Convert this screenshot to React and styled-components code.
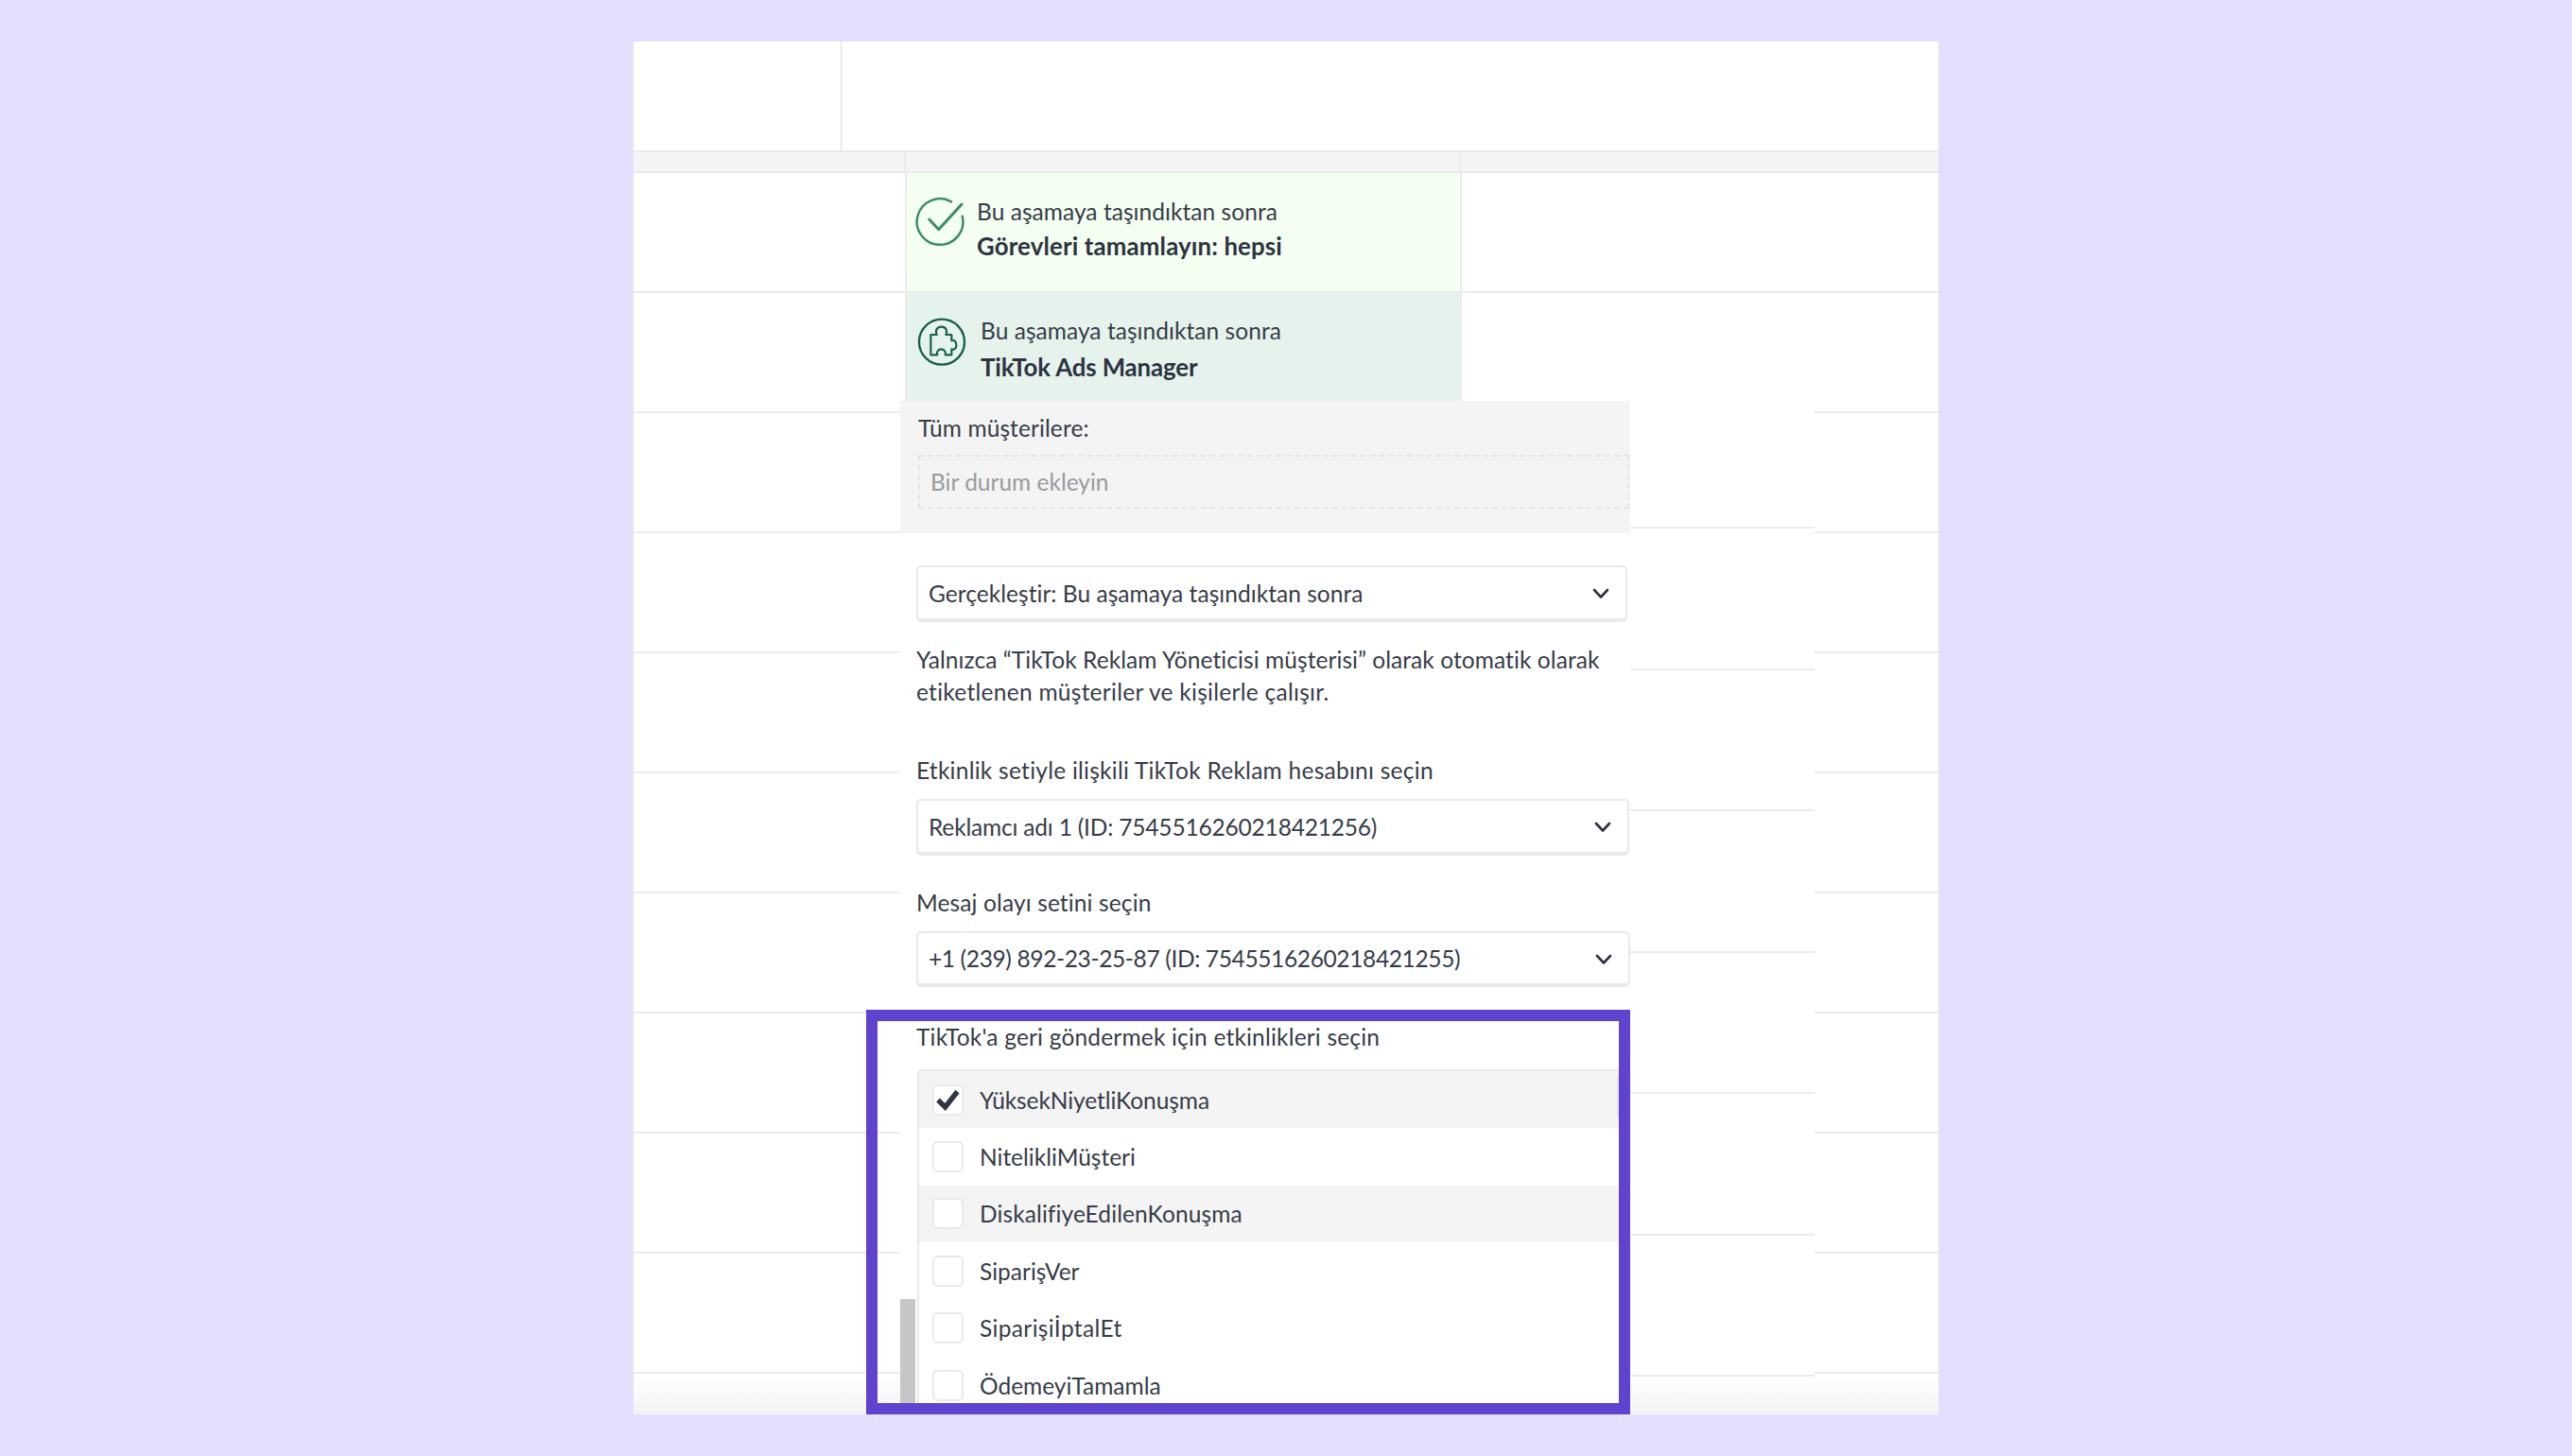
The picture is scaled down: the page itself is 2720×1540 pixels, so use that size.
import React from "react";
import styled, { createGlobalStyle } from "styled-components";

const Global = createGlobalStyle`
  html, body { margin: 0; padding: 0; background: #e4dffe; }
  body { font-family: "Lato", "Open Sans", sans-serif; color: #363c49; }
`;

const Page = styled.div`
  width: 2720px;
  height: 1540px;
  display: flex;
  align-items: center;
  justify-content: center;
`;
const Board = styled.div`
  position: relative;
  width: 1380px;
  height: 1452px;
  background: #fff;
  overflow: hidden;
  display: flex;
  flex-direction: column;
`;
const TopBar = styled.div`
  height: 117px;
  flex: none;
  box-sizing: border-box;
  border-bottom: 2px solid #ebebeb;
  display: flex;
`;
const TopCell = styled.div`
  width: 221px;
  box-sizing: border-box;
  border-right: 2px solid #ebebeb;
`;
const Band = styled.div`
  height: 22px;
  flex: none;
  box-sizing: border-box;
  background: #f4f4f4;
  border-bottom: 2px solid #ebebeb;
  display: flex;
`;
const BandCell = styled.div`
  width: ${(p) => p.$w}px;
  box-sizing: border-box;
  border-right: 2px solid #ebebeb;
`;
const Body = styled.div`
  flex: 1;
  display: flex;
  min-height: 0;
`;
const Column = styled.div`
  width: ${(p) => (p.$w ? `${p.$w}px` : "auto")};
  flex: ${(p) => (p.$w ? "none" : "1")};
  display: flex;
  flex-direction: column;
`;
const GridRow = styled.div`
  height: ${(p) => p.$h}px;
  flex: none;
  box-sizing: border-box;
  border-bottom: 2px solid #ebebeb;
`;
const StageColumn = styled.div`
  width: 589px;
  flex: none;
  box-sizing: border-box;
  border-left: 2px solid #ebebeb;
  border-right: 2px solid #ebebeb;
  display: flex;
  flex-direction: column;
`;
const StageCell = styled.div`
  height: ${(p) => p.$h}px;
  flex: none;
  box-sizing: border-box;
  background: ${(p) => p.$bg};
  border-bottom: 2px solid #ebebeb;
  padding: ${(p) => p.$pad};
  display: flex;
  align-items: flex-start;
  gap: ${(p) => p.$gap}px;
`;
const IconSlot = styled.div`
  flex: none;
  height: 54px;
  margin-top: ${(p) => p.$mt}px;
`;
const StageText = styled.div`
  display: flex;
  flex-direction: column;
  font-size: 24.5px;
  line-height: ${(p) => p.$lh}px;
  white-space: nowrap;
  letter-spacing: 0.05px;
`;
const StageStrong = styled.span`
  font-weight: 700;
  font-size: 25.8px;
  color: #2d3340;
  letter-spacing: ${(p) => p.$ls}px;
`;
const Rest = styled.div`
  flex: 1;
  display: flex;
  flex-direction: column;
  min-width: 0;
`;
const RestColumns = styled.div`
  flex: 1;
  display: flex;
`;
const Fade = styled.div`
  position: absolute;
  left: 0;
  right: 0;
  bottom: 0;
  height: 42px;
  background: linear-gradient(rgba(244, 244, 244, 0), #f3f3f3);
`;

const Popup = styled.div`
  position: absolute;
  left: 282px;
  top: 380px;
  width: 772px;
  height: 1072px;
  background: #fff;
  display: flex;
  flex-direction: column;
  overflow: hidden;
`;
const ConditionPanel = styled.div`
  flex: none;
  height: 140px;
  box-sizing: border-box;
  background: #f4f4f4;
  padding: 12px 0 0 19px;
`;
const Text = styled.div`
  font-size: 24.5px;
  line-height: 34px;
  white-space: nowrap;
  letter-spacing: ${(p) => p.$ls || 0}px;
  margin-top: ${(p) => p.$mt || 0}px;
`;
const ConditionBox = styled.div`
  margin-top: 11px;
  width: 752px;
  height: 57px;
  box-sizing: border-box;
  border: 2px dashed #e5e5e5;
  padding-left: 11px;
  display: flex;
  align-items: center;
  font-size: 24.5px;
  color: #999b9e;
`;
const Form = styled.div`
  flex: 1;
  min-height: 0;
  display: flex;
  flex-direction: column;
  padding-left: 17px;
`;
const Select = styled.div`
  flex: none;
  margin-top: ${(p) => p.$mt}px;
  width: ${(p) => p.$w}px;
  height: ${(p) => p.$h}px;
  box-sizing: border-box;
  border: 2px solid #e9e9e9;
  border-bottom-width: 4px;
  border-radius: 5px;
  background: #fff;
  display: flex;
  align-items: center;
  justify-content: space-between;
  padding: 0 17px 0 11px;
  font-size: 24.5px;
  white-space: nowrap;
  letter-spacing: ${(p) => p.$ls || 0}px;
`;
const ChevronIcon = styled.svg`
  flex: none;
  margin-top: 2px;
`;
const Para = styled.div`
  margin-top: 23px;
  font-size: 24.5px;
  line-height: 34px;
`;
const ParaLine = styled.div`
  white-space: nowrap;
  letter-spacing: ${(p) => p.$ls}px;
`;
const List = styled.div`
  position: relative;
  flex: 1;
  min-height: 0;
  margin: 17px 0 0 1px;
  box-sizing: border-box;
  border: 2px solid #e9e9e9;
  border-right: 0;
  border-bottom: 0;
  border-radius: 5px 0 0 0;
  overflow: hidden;
`;
const Item = styled.div`
  height: 60.4px;
  box-sizing: border-box;
  padding-left: 14px;
  display: flex;
  align-items: center;
  gap: 17px;
  font-size: 24.5px;
  white-space: nowrap;
  letter-spacing: ${(p) => p.$ls}px;
  background: ${(p) => (p.$shade ? "#f4f4f4" : "#fff")};
`;
const Box = styled.span`
  width: 33px;
  height: 33px;
  flex: none;
  box-sizing: border-box;
  border: 2px solid #e9e9e9;
  border-radius: 5px;
  background: #fff;
  display: flex;
  align-items: center;
  justify-content: center;
`;
const ListThumb = styled.div`
  position: absolute;
  top: 4px;
  right: 4px;
  width: 10px;
  height: 47px;
  border-radius: 4px;
  background: #e2e2e2;
`;
const PopupThumb = styled.div`
  position: absolute;
  left: 0;
  top: 950px;
  width: 16px;
  height: 122px;
  background: #c5c6c5;
`;
const Frame = styled.div`
  position: absolute;
  left: 246px;
  top: 1024px;
  width: 808px;
  height: 428px;
  box-sizing: border-box;
  border: 12px solid #5f43cf;
`;

const Chevron = () => (
  <ChevronIcon width="18" height="12" viewBox="0 0 18 12" fill="none" stroke="#2d3340" strokeWidth="2.6" strokeLinecap="round" strokeLinejoin="round">
    <path d="M2 2l7 7.5L16 2" />
  </ChevronIcon>
);
const CheckCircle = () => (
  <svg width="54" height="54" viewBox="50 50 162 162" fill="none" stroke="#3a8f68" strokeWidth="7.5" strokeLinecap="round" strokeLinejoin="round">
    <path d="M170 72A73 73 0 1 0 205 118" />
    <path d="M100 128L130 160L203 80" strokeWidth="9" />
  </svg>
);
const PuzzleCircle = () => (
  <svg width="54" height="54" viewBox="60 435 162 162" fill="none" stroke="#17604d" strokeWidth="7" strokeLinejoin="round">
    <circle cx="141" cy="515" r="72" />
    <path d="M106 492H125C119 478 126 467 140 467C154 467 160 480 154 492H172V511C182 507 187 516 187 525C187 534 182 541 172 538V556H152C155 546 148 538 139 538C130 538 123 546 127 556H106Z" strokeWidth="6.5" />
  </svg>
);
const Tick = () => (
  <svg width="33" height="33" viewBox="0 0 33 33" fill="none" stroke="#2f3542" strokeWidth="5.4" strokeLinejoin="miter" style={{ flex: "none", margin: "-2px" }}>
    <path d="M6 16.5L13.6 24L26.5 7.5" />
  </svg>
);

const leftRows = [127, 127, 127, 127, 127, 127, 127, 127, 127, 127, 127];
const midRows = [249, 149.5, 149.5, 149.5, 149.5, 149.5, 149.5];
const rightRows = [127, 127, 127, 127, 127, 127, 127, 127, 127, 127];
const items = [
  ["YüksekNiyetliKonuşma", -0.08],
  ["NitelikliMüşteri", 0],
  ["DiskalifiyeEdilenKonuşma", 0.1],
  ["SiparişVer", 0],
  ["SiparişiİptalEt", 0.35],
  ["ÖdemeyiTamamla", 0],
];

export default function App() {
  return (
    <Page>
      <Global />
      <Board>
        <TopBar>
          <TopCell />
        </TopBar>
        <Band>
          <BandCell $w={288} />
          <BandCell $w={587} />
        </Band>
        <Body>
          <Column $w={287}>
            {leftRows.map((h, i) => (
              <GridRow key={i} $h={h} />
            ))}
          </Column>
          <StageColumn>
            <StageCell $h={127} $bg="#f4fff2" $pad="23px 0 0 7px" $gap={13}>
              <IconSlot $mt={0}>
                <CheckCircle />
              </IconSlot>
              <StageText $lh={36}>
                <span>Bu aşamaya taşındıktan sonra</span>
                <StageStrong $ls={0.15}>Görevleri tamamlayın: hepsi</StageStrong>
              </StageText>
            </StageCell>
            <StageCell $h={127} $bg="#e6f3ec" $pad="21px 0 0 10px" $gap={14}>
              <IconSlot $mt={4}>
                <PuzzleCircle />
              </IconSlot>
              <StageText $lh={38}>
                <span>Bu aşamaya taşındıktan sonra</span>
                <StageStrong $ls={-0.1}>TikTok Ads Manager</StageStrong>
              </StageText>
            </StageCell>
          </StageColumn>
          <Rest>
            <GridRow $h={127} />
            <RestColumns>
              <Column $w={373}>
                {midRows.map((h, i) => (
                  <GridRow key={i} $h={h} />
                ))}
              </Column>
              <Column>
                {rightRows.map((h, i) => (
                  <GridRow key={i} $h={h} />
                ))}
              </Column>
            </RestColumns>
          </Rest>
        </Body>
        <Fade />
        <Popup>
          <ConditionPanel>
            <Text $ls={0.1}>Tüm müşterilere:</Text>
            <ConditionBox>Bir durum ekleyin</ConditionBox>
          </ConditionPanel>
          <Form>
            <Select $mt={34} $w={752} $h={60} $ls={0.04}>
              Gerçekleştir: Bu aşamaya taşındıktan sonra
              <Chevron />
            </Select>
            <Para>
              <ParaLine $ls={0.08}>Yalnızca “TikTok Reklam Yöneticisi müşterisi” olarak otomatik olarak</ParaLine>
              <ParaLine $ls={0.27}>etiketlenen müşteriler ve kişilerle çalışır.</ParaLine>
            </Para>
            <Text $mt={49} $ls={0.26}>Etkinlik setiyle ilişkili TikTok Reklam hesabını seçin</Text>
            <Select $mt={13} $w={754} $h={60} $ls={-0.18}>
              Reklamcı adı 1 (ID: 7545516260218421256)
              <Chevron />
            </Select>
            <Text $mt={33} $ls={0.13}>Mesaj olayı setini seçin</Text>
            <Select $mt={13} $w={755} $h={59} $ls={-0.36}>
              +1 (239) 892-23-25-87 (ID: 7545516260218421255)
              <Chevron />
            </Select>
            <Text $mt={36} $ls={0.19}>TikTok'a geri göndermek için etkinlikleri seçin</Text>
            <List>
              {items.map(([t, ls], i) => (
                <Item key={t} $ls={ls} $shade={i === 0 || i === 2}>
                  <Box>{i === 0 && <Tick />}</Box>
                  {t}
                </Item>
              ))}
              <ListThumb />
            </List>
          </Form>
          <PopupThumb />
        </Popup>
        <Frame />
      </Board>
    </Page>
  );
}
